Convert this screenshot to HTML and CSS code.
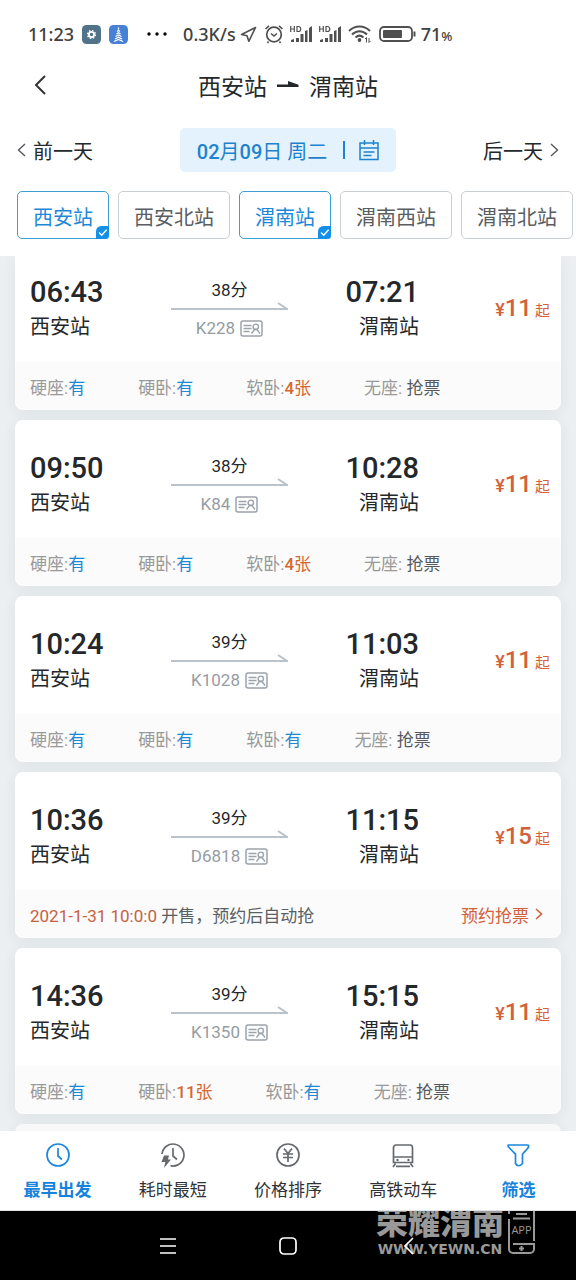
FILE: index.html
```html
<!DOCTYPE html>
<html lang="zh-CN">
<head>
<meta charset="utf-8">
<meta name="viewport" content="width=device-width, initial-scale=1">
<title>西安站 - 渭南站</title>
<link rel="stylesheet" href="styles.css">
</head>
<body>
<svg class="symbols" aria-hidden="true">
  <symbol id="arrow" viewBox="0 0 117 8" preserveAspectRatio="none"><path d="M0 7H116L107 1" fill="none" stroke="#b9c2c9" stroke-width="2"/></symbol>
  <symbol id="idcard" viewBox="0 0 23 17"><rect x="1" y="1" width="21" height="15" rx="2" fill="none" stroke="#9aa3ab" stroke-width="1.5"/><path d="M3.500 5.500h8M3.500 8.500h8M3.500 11.500h6M11.500 13.500l3-4h2.500l3 4" fill="none" stroke="#9aa3ab" stroke-width="1.300"/><circle cx="15.800" cy="6.800" r="2.700" fill="none" stroke="#9aa3ab" stroke-width="1.400"/></symbol>
  <symbol id="signal" viewBox="0 0 22 18"><path d="M1 17v-2l3-1v3zM6 17v-4h3v4zM10.500 17V9h3v8zM15 17V6l2.500-1v12zM19 17V3l3-2v16z" fill="#505050"/><path d="M.7 1v6M4.300 1v6M.7 4h3.600M7 1.500v5h1.500c3 0 3-5 0-5z" fill="none" stroke="#505050" stroke-width="1.200"/></symbol>
  <symbol id="tick" viewBox="0 0 12 12"><path d="M5 0h7v9a3 3 0 0 1-3 3H0V5a5 5 0 0 1 5-5z" fill="#1590e8"/><path d="M2.800 6l2.500 2.500 4.500-5" fill="none" stroke="#fff" stroke-width="1.300"/></symbol>
</svg>

<header class="top">
  <div class="status">
    <span class="status-clock">11:23</span>
    <svg class="app-icon" viewBox="0 0 19 19"><rect width="19" height="19" rx="4.500" fill="#50738a"/><circle cx="9.500" cy="9.500" r="2.600" fill="none" stroke="#fff" stroke-width="1.800"/><circle cx="9.500" cy="9.500" r="4" fill="none" stroke="#fff" stroke-width="1.200" stroke-dasharray="1.570 1.570"/></svg>
    <svg class="app-icon" viewBox="0 0 19 19"><rect width="19" height="19" rx="4.500" fill="#4681d6"/><path d="M9.500 2.500v2M8 6.500l1.500-1 1.500 1M7.500 9l2-1.300L11.500 9M6.500 11.500l3-1.600 3 1.600M6 14l3.500-1.800L13 14M5 16.500l4.500-2 4.500 2" fill="none" stroke="#fff" stroke-width="1.300"/></svg>
    <svg class="dots" viewBox="0 0 20 4"><circle cx="2" cy="2" r="1.700"/><circle cx="10" cy="2" r="1.700"/><circle cx="18" cy="2" r="1.700"/></svg>
    <span class="status-speed">0.3K/s</span>
    <svg class="locate" viewBox="0 0 17 17"><path d="M15.500 1.500L1.500 8.500l5.500 1.200 1.800 5.600z" fill="none" stroke="#505050" stroke-width="1.600" stroke-linejoin="round"/></svg>
    <svg class="alarm" viewBox="0 0 20 20"><circle cx="10" cy="10.500" r="7.300" fill="none" stroke="#505050" stroke-width="1.700"/><path d="M1.500 5L5 1.800M18.500 5L15 1.800M7 9.500l3 2.500 3-2.500M4.500 17.500l-1 1.500M15.500 17.500l1 1.500" fill="none" stroke="#505050" stroke-width="1.600"/></svg>
    <svg class="signal"><use href="#signal"/></svg>
    <svg class="signal"><use href="#signal"/></svg>
    <svg class="wifi" viewBox="0 0 24 18"><path d="M1 6c6-6 15-6 21 0M4 9.500c4.500-4.500 10.500-4.500 15 0M7.500 12.500c2.500-2.300 5.500-2.300 8 0" fill="none" stroke="#505050" stroke-width="2"/><circle cx="11.500" cy="15" r="1.900" fill="#505050"/><path d="M18.500 17.500v-5l-1.500 1.500M21 13v4.500l1.500-1.500" fill="none" stroke="#505050"/></svg>
    <svg class="battery" viewBox="0 0 37 16"><rect x="1" y="1" width="32" height="14" rx="4" fill="none" stroke="#505050" stroke-width="1.800"/><rect x="4" y="4" width="19" height="8" rx="1" fill="#505050"/><path d="M35.500 5.500v5" stroke="#505050" stroke-width="2"/></svg>
    <span class="status-power">71<small>%</small></span>
  </div>

  <div class="titlebar">
    <button class="back" aria-label="返回"><svg viewBox="0 0 12 20"><path d="M11 1L2 10l9 9" fill="none" stroke="#303236" stroke-width="2"/></svg></button>
    <h1 class="route">西安站 <svg viewBox="0 0 22 8" aria-hidden="true"><path d="M0 3.500h11V0l10.500 3.700V6H0z" fill="#25282b"/></svg> 渭南站</h1>
  </div>

  <nav class="days">
    <button class="day"><svg viewBox="0 0 9 14"><path d="M8 1L1.500 7 8 13" fill="none" stroke="#55585c" stroke-width="1.400"/></svg>前一天</button>
    <button class="date"><span class="date-text"><b>02</b>月<b>09</b>日 周二</span><span class="date-bar"></span><svg viewBox="0 0 20 21"><path d="M1 3h18v16.500H1zM1 8h18M5.500 0v5M14.500 0v5M4.500 12h11M4.500 15.500h8" fill="none" stroke="#1e82ce" stroke-width="1.500"/></svg></button>
    <button class="day day-next">后一天<svg viewBox="0 0 9 14"><path d="M1 1l6.500 6L1 13" fill="none" stroke="#55585c" stroke-width="1.400"/></svg></button>
  </nav>

  <div class="chips">
    <label class="chip"><input type="checkbox" checked><span>西安站</span><svg><use href="#tick"/></svg></label>
    <label class="chip"><input type="checkbox"><span>西安北站</span><svg><use href="#tick"/></svg></label>
    <label class="chip"><input type="checkbox" checked><span>渭南站</span><svg><use href="#tick"/></svg></label>
    <label class="chip"><input type="checkbox"><span>渭南西站</span><svg><use href="#tick"/></svg></label>
    <label class="chip"><input type="checkbox"><span>渭南北站</span><svg><use href="#tick"/></svg></label>
  </div>
</header>

<main class="list">
  <article class="card card-first">
    <div class="trip">
      <div class="stop"><time>06:43</time><span>西安站</span></div>
      <div class="leg"><span class="length">38分</span><svg class="arrow"><use href="#arrow"/></svg><span class="train">K228<svg><use href="#idcard"/></svg></span></div>
      <div class="stop stop-to"><time>07:21</time><span>渭南站</span></div>
      <div class="price"><span class="yen">¥</span><span class="amount">11</span>起</div>
    </div>
    <div class="seats"><span>硬座:<b>有</b></span><span>硬卧:<b>有</b></span><span>软卧:<b class="few"><strong>4</strong>张</b></span><span>无座: <i>抢票</i></span></div>
  </article>
  <article class="card">
    <div class="trip">
      <div class="stop"><time>09:50</time><span>西安站</span></div>
      <div class="leg"><span class="length">38分</span><svg class="arrow"><use href="#arrow"/></svg><span class="train">K84<svg><use href="#idcard"/></svg></span></div>
      <div class="stop stop-to"><time>10:28</time><span>渭南站</span></div>
      <div class="price"><span class="yen">¥</span><span class="amount">11</span>起</div>
    </div>
    <div class="seats"><span>硬座:<b>有</b></span><span>硬卧:<b>有</b></span><span>软卧:<b class="few"><strong>4</strong>张</b></span><span>无座: <i>抢票</i></span></div>
  </article>
  <article class="card">
    <div class="trip">
      <div class="stop"><time>10:24</time><span>西安站</span></div>
      <div class="leg"><span class="length">39分</span><svg class="arrow"><use href="#arrow"/></svg><span class="train">K1028<svg><use href="#idcard"/></svg></span></div>
      <div class="stop stop-to"><time>11:03</time><span>渭南站</span></div>
      <div class="price"><span class="yen">¥</span><span class="amount">11</span>起</div>
    </div>
    <div class="seats"><span>硬座:<b>有</b></span><span>硬卧:<b>有</b></span><span>软卧:<b>有</b></span><span>无座: <i>抢票</i></span></div>
  </article>
  <article class="card">
    <div class="trip">
      <div class="stop"><time>10:36</time><span>西安站</span></div>
      <div class="leg"><span class="length">39分</span><svg class="arrow"><use href="#arrow"/></svg><span class="train">D6818<svg><use href="#idcard"/></svg></span></div>
      <div class="stop stop-to"><time>11:15</time><span>渭南站</span></div>
      <div class="price"><span class="yen">¥</span><span class="amount">15</span>起</div>
    </div>
    <div class="seats presale"><span><em>2021-1-31 10:0:0</em> 开售，预约后自动抢</span><button class="reserve">预约抢票<svg viewBox="0 0 8 12"><path d="M1 1l5.500 5L1 11" fill="none" stroke="#d2603a" stroke-width="1.600"/></svg></button></div>
  </article>
  <article class="card">
    <div class="trip">
      <div class="stop"><time>14:36</time><span>西安站</span></div>
      <div class="leg"><span class="length">39分</span><svg class="arrow"><use href="#arrow"/></svg><span class="train">K1350<svg><use href="#idcard"/></svg></span></div>
      <div class="stop stop-to"><time>15:15</time><span>渭南站</span></div>
      <div class="price"><span class="yen">¥</span><span class="amount">11</span>起</div>
    </div>
    <div class="seats"><span>硬座:<b>有</b></span><span>硬卧:<b class="few"><strong>11</strong>张</b></span><span>软卧:<b>有</b></span><span>无座: <i>抢票</i></span></div>
  </article>
  <article class="card card-next"></article>
</main>

<nav class="tabs">
  <button class="tab tab-on"><svg viewBox="0 0 26 26"><circle cx="13" cy="13" r="11" /><path d="M13 6v8l4 3.500"/></svg>最早出发</button>
  <button class="tab"><svg viewBox="0 0 26 26"><path d="M2 12A11 11 0 1 1 9 23.300M13 6v8l4 3.500"/><path class="backing" d="M1 13h9.500v12H1z"/><path class="solid" d="M4 13.500h5L8 17.500h3L4 26l1.300-6H1.500z"/></svg>耗时最短</button>
  <button class="tab"><svg viewBox="0 0 26 26"><circle cx="13" cy="13" r="11"/><path d="M9 6.500l4 5 4-5M13 11.500V20M8 12h10M8 15.500h10"/></svg>价格排序</button>
  <button class="tab"><svg viewBox="0 0 26 26"><path d="M6 3h14a2.500 2.500 0 0 1 2.500 2.500V20.500h-19V5.500A2.500 2.500 0 0 1 6 3zM3.500 15h19M5.500 21.500L3 25M20.500 21.500L23 25M6 24.300h14"/><circle class="solid" cx="7.500" cy="18" r="1.200"/><circle class="solid" cx="18.500" cy="18" r="1.200"/></svg>高铁动车</button>
  <button class="tab tab-on"><svg viewBox="0 0 26 26"><path d="M3.500 3h19q1.500 0 1 2c-1 2-3.500 4.500-6 7v9.500q-4.500 4.500-7 0V12c-3-2.500-5-5-7-7q-1-2 0-2z"/></svg>筛选</button>
</nav>

<footer class="system">
  <button aria-label="菜单"><svg viewBox="0 0 18 18"><path d="M1 2h16M1 9h16M1 16h16"/></svg></button>
  <button aria-label="主页"><svg viewBox="0 0 18 18"><rect x="1" y="1" width="16" height="16" rx="4"/></svg></button>
  <button aria-label="后退"><svg viewBox="0 0 18 18"><path d="M14 1L6 9l8 8"/></svg></button>
  <div class="mark">
    <div class="mark-text"><strong>荣耀渭南</strong><span>WWW.YEWN.CN</span></div>
    <div class="mark-phone"><svg viewBox="0 0 27 48"><path d="M1 8V5a4 4 0 0 1 4-4h17a4 4 0 0 1 4 4v30M1 13v30a4 4 0 0 0 4 4h17a4 4 0 0 0 4-4v-5H5M5 12.500h17M8 8h11M13.500 40v5M11 42.500h5"/></svg><span>APP</span></div>
  </div>
</footer>
</body>
</html>
```

FILE: styles.css
```css
* { box-sizing: border-box; }

body {
  margin: 0;
  height: 100vh;
  display: flex;
  flex-direction: column;
  background: #ebeff2;
  color: #25282b;
  font-family: Roboto, "Noto Sans CJK SC", sans-serif;
  font-size: 17px;
}

button {
  margin: 0;
  padding: 0;
  border: 0;
  background: none;
  color: inherit;
  font: inherit;
}

svg { display: block; flex: none; }
.symbols { position: absolute; width: 0; height: 0; }

/* Header */
.top { flex: none; padding-bottom: 17px; background: #fff; }

.status {
  display: flex;
  align-items: center;
  height: 68px;
  padding-left: 28px;
  color: #404040;
  font-family: "Noto Sans", sans-serif;
  font-size: 18px;
  font-weight: 500;
}
.app-icon { width: 19px; height: 19px; margin-left: 8px; }
.dots { width: 20px; height: 4px; margin: 0 16px 0 19px; }
.locate { width: 17px; height: 17px; margin-left: 4px; }
.alarm { width: 20px; height: 20px; margin: 0 6px 0 7px; }
.signal { width: 22px; height: 18px; margin-right: 7px; }
.wifi { width: 24px; height: 18px; margin-right: 7px; }
.battery { width: 37px; height: 16px; margin-right: 5px; }
.status-power small { font-size: 13px; }

.titlebar {
  display: grid;
  grid-template-columns: 1fr auto 1fr;
  align-items: center;
  height: 30px;
  padding: 0 33px;
}
.back svg { width: 14px; height: 20px; }
.route {
  display: flex;
  align-items: center;
  gap: 10px;
  margin: 0;
  font-size: 23px;
  font-weight: 400;
}
.route svg { width: 22px; height: 8px; }

.days {
  display: grid;
  grid-template-columns: 1fr auto 1fr;
  align-items: center;
  margin-top: 30px;
  padding: 0 17px;
  font-size: 20px;
}
.day { display: flex; align-items: center; gap: 7px; }
.day svg { width: 9px; height: 14px; }
.day-next { justify-self: end; }
.date {
  display: flex;
  align-items: center;
  height: 44px;
  padding: 0 17px;
  border-radius: 5px;
  background: #e3f2fd;
  color: #1e82ce;
}
.date b { font-weight: 500; }
.date-bar { width: 2px; height: 18px; margin: 0 14px 0 16px; background: #1e82ce; }
.date svg { width: 20px; height: 21px; }

.chips {
  display: flex;
  gap: 9px;
  margin-top: 19px;
  padding-left: 17px;
  overflow: hidden;
}
.chip {
  position: relative;
  display: flex;
  flex: none;
  align-items: center;
  height: 48px;
  padding: 2px 15px 0;
  border: 1px solid #c9cfd2;
  border-radius: 5px;
  color: #5a5d61;
  font-size: 20px;
}
.chip input { position: absolute; opacity: 0; }
.chip svg { position: absolute; right: -1px; bottom: -1px; display: none; width: 13px; height: 13px; }
.chip:has(input:checked) { border-color: #3d9fd0; color: #1e88d8; }
.chip:has(input:checked) svg { display: block; }

/* Train list */
.list {
  display: flex;
  flex: 1;
  flex-direction: column;
  gap: 10px;
  min-height: 0;
  padding: 0 15px;
  overflow: hidden;
}
.card {
  flex: none;
  border-radius: 8px;
  background: #fff;
  box-shadow: 0 2px 14px rgba(40, 50, 55, 0.07);
  overflow: hidden;
}
.card-next { height: 166px; background: #f8f8f8; }
.trip {
  display: grid;
  grid-template-columns: 141fr 117fr 131fr 131fr;
  padding: 30px 11px 16px 15px;
}
.card-first { border-radius: 0 0 8px 8px; }
.card-first .trip { padding-top: 18px; }
.stop { display: flex; flex-direction: column; font-size: 20px; line-height: 34px; }
.stop time { font-size: 29px; font-weight: 500; line-height: 36px; }
.stop-to { align-items: flex-end; }
.leg { display: flex; flex-direction: column; align-items: center; }
.length { padding-top: 4px; line-height: 24px; }
.arrow { width: 100%; height: 8px; }
.train { display: flex; align-items: center; gap: 5px; line-height: 36px; color: #959ca3; }
.train svg { width: 23px; height: 17px; }
.price {
  justify-self: end;
  color: #d2603a;
  font-size: 15px;
  line-height: 68px;
}
.yen { font-size: 18px; font-weight: 500; }
.amount { margin-right: 3px; font-size: 24px; font-weight: 500; }

.seats {
  display: flex;
  align-items: center;
  gap: 53px;
  height: 48px;
  padding: 0 18px 0 15px;
  background: #fbfbfb;
  color: #999;
}
.seats b { color: #1e88d0; font-weight: 400; }
.seats .few { color: #d4672f; }
.seats strong { font-weight: 500; }
.seats i { color: #55595e; font-style: normal; }
.seats.presale { justify-content: space-between; color: #5a5f65; }
.presale em { color: #c7603f; font-style: normal; }
.reserve { display: flex; align-items: center; gap: 6px; color: #d2603a; }
.reserve svg { width: 8px; height: 12px; }

/* Sorting tabs */
.tabs {
  display: grid;
  flex: none;
  grid-template-columns: repeat(5, 1fr);
  height: 80px;
  border-bottom: 1px solid #dfe3e5;
  background: #fff;
}
.tab {
  display: flex;
  flex-direction: column;
  align-items: center;
  gap: 8px;
  padding-top: 11px;
  color: #303236;
}
.tab svg { width: 26px; height: 26px; fill: none; stroke: #66696e; stroke-width: 1.7; }
.tab .solid { fill: #66696e; stroke: none; }
.tab .backing { fill: #fff; stroke: none; }
.tab-on { color: #1583dc; font-weight: 700; }
.tab-on svg { stroke: #1e88dc; }

/* System navigation */
.system {
  position: relative;
  display: flex;
  flex: none;
  align-items: center;
  justify-content: center;
  gap: 102px;
  height: 69px;
  background: #000;
  overflow: hidden;
}
.system svg { width: 18px; height: 18px; fill: none; stroke: #fff; stroke-width: 1.7; }
.system button { z-index: 1; }
.mark {
  position: absolute;
  top: -5px;
  right: 41px;
  display: flex;
  gap: 4px;
  color: #999;
}
.mark-text { display: flex; flex-direction: column; align-items: center; }
.mark-text strong { font-size: 32px; font-weight: 900; line-height: 34px; }
.mark-text span { font: 700 14px/18px "DejaVu Sans", sans-serif; }
.mark-phone { display: grid; width: 27px; height: 48px; place-items: center; }
.mark-phone > * { grid-area: 1 / 1; }
.system .mark-phone svg { width: 27px; height: 48px; stroke: #999; stroke-width: 2; }
.mark-phone span { font: 11px/20px "Open Sans", sans-serif; }
```
